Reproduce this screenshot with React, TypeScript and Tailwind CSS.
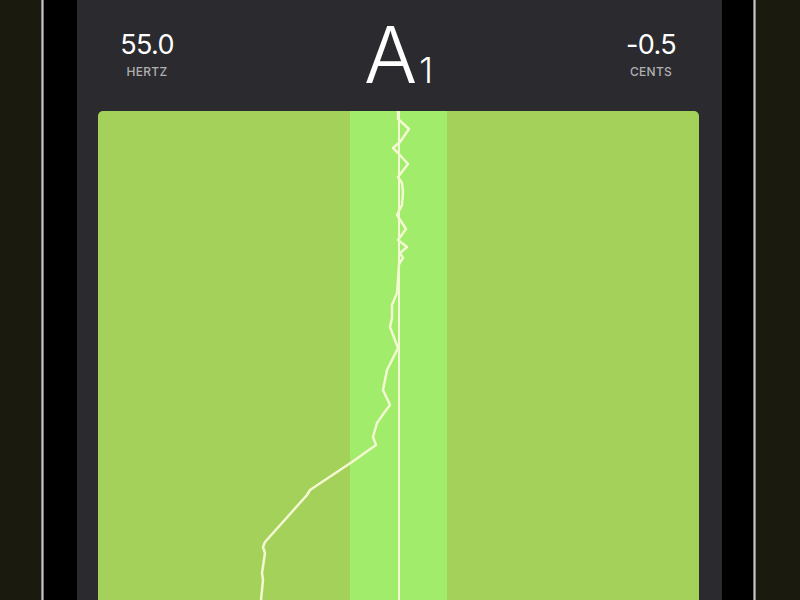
import React from 'react';

// pitch trace, in page coordinates (the svg viewBox matches the panel box)
const trace: [number, number][] = [
  [398, 111], [398, 119], [409, 129], [400, 142], [393, 148], [398, 153], [408, 164],
  [398, 177], [402, 183], [403, 192], [402, 205], [397, 215], [406, 229], [398, 240],
  [407, 247], [400, 253], [403, 258], [399, 264], [398, 280], [397, 293], [392, 305],
  [392, 318], [390, 327], [398, 348], [387, 370], [383, 390], [390, 405], [384, 413],
  [377, 423], [373, 437], [376, 445], [352, 462], [310, 490], [307, 495], [265, 542],
  [263, 547], [265, 553], [262, 573], [263, 580], [261, 600],
];

const Readout: React.FC<{ value: string; label: string; width: string }> = ({ value, label, width }) => (
  <div className={`${width} flex flex-col items-center`}>
    <span className="text-[27px] leading-none text-white tracking-tight">{value}</span>
    <span className="mt-[8px] text-[12px] leading-none font-medium text-[#b0b0b3] tracking-wide">{label}</span>
  </div>
);

export default function App() {
  const points = trace.map(([x, y]) => `${x},${y}`).join(' ');

  return (
    <div
      className="flex h-[600px] w-[800px] overflow-hidden bg-[#1a1b0e]"
      style={{ fontFamily: 'Inter, "Liberation Sans", sans-serif' }}
    >
      {/* left of the phone */}
      <div className="w-[41px] shrink-0 bg-[#1a1b0e]" />
      <div className="w-[3px] shrink-0 bg-gradient-to-r from-[#6b6b6b] via-[#c4c4c4] to-[#5a5a5a]" />
      <div className="w-[33px] shrink-0 bg-black" />

      {/* screen */}
      <div className="flex w-[645px] shrink-0 flex-col bg-[#2b2a2e]">
        <div className="flex h-[111px] shrink-0 items-center pb-[2px]">
          <Readout value="55.0" label="HERTZ" width="w-[140px]" />
          <div className="flex flex-1 items-baseline justify-center">
            <span className="text-[79px] leading-none font-light text-white">A</span>
            <span className="ml-[2px] text-[35px] leading-none font-light text-white">1</span>
          </div>
          <Readout value="-0.5" label="CENTS" width="w-[142px]" />
        </div>

        <div className="ml-[21px] mr-[23px] flex flex-1 justify-center overflow-hidden rounded-t-[5px] bg-[#a4d15a] relative">
          <div className="flex w-[97px] justify-center bg-[#a1ec6a]">
            <div className="w-[2px] bg-[#f3f8d2]" />
          </div>
          <svg
            className="absolute inset-0 h-full w-full"
            viewBox="98 111 601 489"
            preserveAspectRatio="none"
          >
            <polyline
              points={points}
              fill="none"
              stroke="#f3f8d2"
              strokeWidth={2.5}
              strokeLinejoin="round"
              strokeLinecap="round"
            />
          </svg>
        </div>
      </div>

      {/* right of the phone */}
      <div className="w-[31px] shrink-0 bg-black" />
      <div className="w-[3px] shrink-0 bg-gradient-to-r from-[#5a5a5a] via-[#c4c4c4] to-[#6b6b6b]" />
      <div className="flex-1 bg-[#1a1b0e]" />
    </div>
  );
}
